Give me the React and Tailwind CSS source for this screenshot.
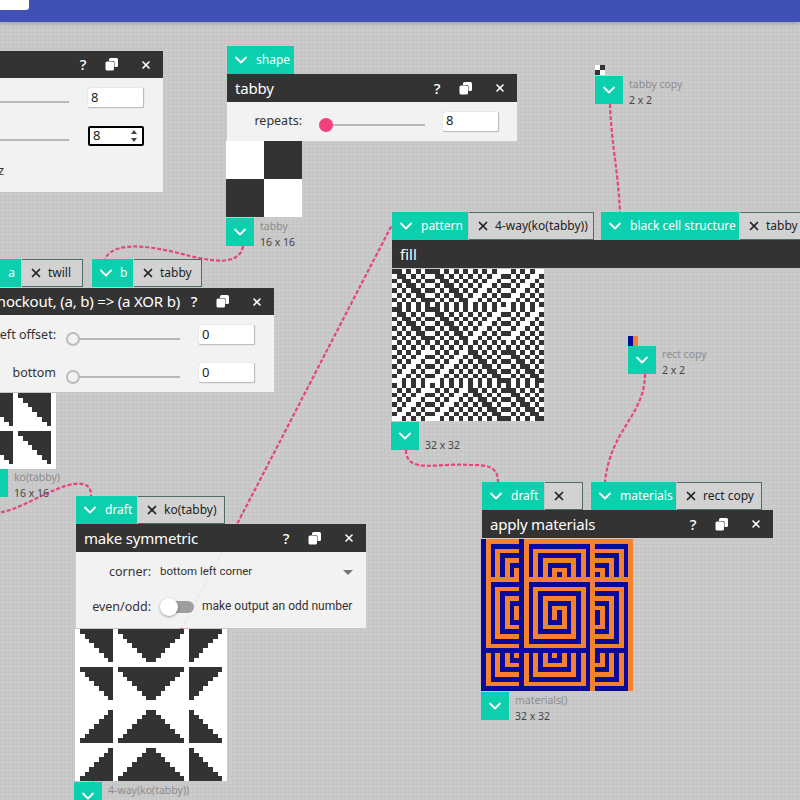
import { ChevronDown, X } from 'lucide-react';

const DARK = '#333333';
const BLUE = '#0a0a9a';
const ORANGE = '#f5822e';

// which cells of the 4-way draft are dark
const inTriangle = (i, n) => i >= 0 && i < n;

const fourWay = (x, y) => {
  let r = -1;
  if (y <= 6) r = y;
  else if (y >= 8 && y <= 14) r = y - 8;
  else if (y >= 17 && y <= 23) r = 23 - y;
  else if (y >= 25) r = 31 - y;
  if (r < 0) return false;
  if (inTriangle(x - 1, 7)) return x - 1 >= r;
  if (inTriangle(x - 9, 14)) return x >= 9 + r && x <= 22 - r;
  if (inTriangle(x - 24, 7)) return x <= 30 - r;
  return false;
};

const koTabby = (x, y) => {
  const c = x % 8;
  const r = y % 8;
  return r < 7 && c < 7 && c >= r;
};

const fillCell = (x, y) => (((x + y) % 2 === 1) !== fourWay(x, y) ? '#ffffff' : DARK);

const materialCell = (x, y) => {
  if (fourWay(x, y)) return y % 2 === 0 ? ORANGE : BLUE;
  return x % 2 === 0 ? BLUE : ORANGE;
};

const Cells = ({ cols, rows, color, className }) => {
  const cells = [];
  for (let y = 0; y < rows; y++) {
    for (let x = 0; x < cols; x++) {
      cells.push(<rect key={`${x}-${y}`} x={x} y={y} width="1" height="1" fill={color(x, y)} />);
    }
  }
  return (
    <svg viewBox={`0 0 ${cols} ${rows}`} preserveAspectRatio="none" shapeRendering="crispEdges" className={className}>
      {cells}
    </svg>
  );
};

const Output = ({ label, size }) => (
  <div className="flex">
    <button className="h-7 w-[28px] flex items-center justify-center bg-[#0ccfae] text-white">
      <ChevronDown size={20} strokeWidth={2.2} />
    </button>
    <div className="ml-[6px] text-[10.5px] leading-[16px]">
      <div className="text-[#8c8c8c]">{label}</div>
      <div className="text-[#444444]">{size}</div>
    </div>
  </div>
);

const Tab = ({ label, width }) => (
  <div className={`h-7 shrink-0 bg-[#0ccfae] flex items-center pl-[4px] text-white text-[12px] ${width}`}>
    <ChevronDown size={20} strokeWidth={2.2} className="mr-[5px] shrink-0" />
    <span className="whitespace-nowrap">{label}</span>
  </div>
);

const Source = ({ label, width }) => (
  <div className={`h-7 shrink-0 bg-[#d2d2d2] border-y border-r border-[#4f6a6a] flex items-center pl-[7px] text-[#222222] text-[12px] overflow-hidden ${width}`}>
    <X size={14} strokeWidth={3} className="mr-[5px] shrink-0" />
    <span className="whitespace-nowrap">{label}</span>
  </div>
);

const TitleIcons = ({ className }) => (
  <div className={`flex items-center text-white ${className}`}>
    <span className="w-3 text-[15px] font-medium text-center">?</span>
    <svg width="13" height="13" viewBox="0 0 13 13" className="ml-[16px]">
      <rect x="4" y="0" width="9" height="9" rx="1.5" fill="#ffffff" />
      <rect x="0" y="3" width="9.5" height="10" rx="1.5" fill="#333333" />
      <rect x="0.5" y="3.5" width="8.5" height="9" rx="1.5" fill="#ffffff" />
    </svg>
    <X size={12} strokeWidth={3.2} className="ml-[22px]" />
  </div>
);

const Slider = ({ width, pink, bare }) => (
  <div className={`relative h-[2px] mt-[7px] bg-[#b8b8b8] ${width}`}>
    {pink && <div className="absolute -left-[1px] -top-[6px] w-[14px] h-[14px] rounded-full bg-[#f2407c]" />}
    {!pink && !bare && (
      <div className="absolute left-0 -top-[6px] w-[14px] h-[14px] rounded-full border-2 border-[#bdbdbd] bg-[#f2f2f2]" />
    )}
  </div>
);

const NumberBox = ({ focus, value }) => (
  <div className={`w-[56px] h-[20px] bg-white rounded-[2px] flex items-center pl-[3px] text-[13px] text-[#222222] ${focus ? 'border-2 border-black' : 'border-r border-b border-[#bdbdbd] shadow-[0_0_1px_#999]'}`}>
    <span className="flex-1">{value}</span>
    {focus && (
      <svg width="8" height="14" viewBox="0 0 8 14" className="mr-[4px]">
        <path d="M4 1 7 5H1zM4 13 1 9h6z" fill="#444444" />
      </svg>
    )}
  </div>
);

const wires = [
  'M243 246C240 265 215 262 190 256C160 248 115 238 105 259',
  'M-5 513C15 512 40 495 55 490C70 483 92 478 91 496',
  'M88 790C150 700 290 420 392 225',
  'M610 104C611 140 618 170 620 212',
  'M645 374C645 415 610 430 605 482',
  'M406 450C406 475 440 462 470 465C485 465 498 465 498 482',
];

export default function App() {
  return (
    <div className="relative w-[800px] h-[800px] overflow-hidden text-[#333333] font-['Noto_Sans','Open_Sans',sans-serif] bg-[#cbcbcb] bg-[linear-gradient(#c5c5c5_1px,transparent_1px),linear-gradient(90deg,#c5c5c5_1px,transparent_1px)] bg-[size:4px_4px]">
      {/* wires sit under the panels */}
      <svg className="absolute inset-0" width="800" height="800" fill="none">
        {wires.map((d) => (
          <path key={d} d={d} stroke="#e5447c" strokeWidth="2.2" strokeDasharray="4 2" />
        ))}
      </svg>

      <header className="absolute top-0 left-0 right-0 h-[22px] bg-[#3f51b5] shadow-[0_1px_4px_rgba(0,0,0,0.25)]">
        <div className="w-[29px] h-[10px] bg-white rounded-br-[3px]" />
      </header>

      {/* size panel, cut by the left edge */}
      <section className="absolute left-0 top-[51px] w-[163px]">
        <div className="h-[27px] bg-[#333333] flex items-center justify-end">
          <TitleIcons className="pr-[11px]" />
        </div>
        <div className="h-[114px] bg-[#f2f2f2] pt-[10px]">
          <div className="flex items-center h-[20px]">
            <Slider width="w-[69px]" bare />
            <div className="ml-[19px]"><NumberBox value="8" /></div>
          </div>
          <div className="flex items-center h-[20px] mt-[18px]">
            <Slider width="w-[69px]" bare />
            <div className="ml-[19px]"><NumberBox value="8" focus /></div>
          </div>
          <div className="mt-[14px] text-[13px] leading-[20px] -ml-[2px]">z</div>
        </div>
      </section>

      {/* tabby */}
      <section className="absolute left-[227px] top-[46px] w-[290px]">
        <Tab label="shape" width="w-[67px]" />
        <div className="h-[28px] bg-[#333333] flex items-center justify-between pl-[8px] text-white text-[15px] tracking-[-0.2px]">
          tabby
          <TitleIcons className="pr-[11px]" />
        </div>
        <div className="h-[39px] bg-[#f2f2f2] flex items-center">
          <span className="w-[75px] text-right text-[12.5px]">repeats:</span>
          <div className="ml-[18px]"><Slider width="w-[105px]" pink /></div>
          <div className="ml-[18px]"><NumberBox value="8" /></div>
        </div>
        <div className="-ml-[1px]">
          <Cells cols={2} rows={2} color={(x, y) => ((x + y) % 2 ? DARK : '#ffffff')} className="w-[76px] h-[76px] block" />
          <div className="mt-px"><Output label="tabby" size="16 x 16" /></div>
        </div>
      </section>

      {/* knockout */}
      <section className="absolute left-0 top-[259px] w-[274px]">
        <div className="flex">
          <div className="h-7 w-[21px] bg-[#0ccfae] text-white text-[12px] flex items-center justify-end pr-[6px]">a</div>
          <div className="ml-px"><Source label="twill" width="w-[61px]" /></div>
          <div className="ml-[9px] h-7 w-[41px] bg-[#0ccfae] flex items-center pl-[4px] text-white text-[12px]">
            <ChevronDown size={20} strokeWidth={2.2} className="mr-[4px] shrink-0" />
            b
          </div>
          <div className="ml-px"><Source label="tabby" width="w-[68px]" /></div>
        </div>
        <div className="h-[27px] mt-px bg-[#333333] flex items-center text-white text-[15px] tracking-[-0.2px] relative overflow-hidden">
          <span className="absolute right-[94px] whitespace-nowrap">knockout, (a, b) =&gt; (a XOR b)</span>
          <TitleIcons className="absolute right-[11px]" />
        </div>
        <div className="h-[77px] bg-[#f2f2f2] text-[12.5px] pt-[10px]">
          <div className="flex items-center h-[20px]">
            <span className="w-[56px] whitespace-nowrap flex justify-end">left offset:</span>
            <div className="ml-[10px]"><Slider width="w-[114px]" /></div>
            <div className="ml-[19px]"><NumberBox value="0" /></div>
          </div>
          <div className="flex items-center h-[20px] mt-[18px]">
            <span className="w-[56px] text-right">bottom</span>
            <div className="ml-[10px]"><Slider width="w-[114px]" /></div>
            <div className="ml-[19px]"><NumberBox value="0" /></div>
          </div>
        </div>
      </section>

      <section className="absolute left-[-20px] top-[393px]">
        <Cells cols={16} rows={16} color={(x, y) => (koTabby(x, y) ? DARK : '#ffffff')} className="w-[76px] h-[76px] block" />
        <Output label="ko(tabby)" size="16 x 16" />
      </section>

      {/* make symmetric */}
      <section className="absolute left-[76px] top-[496px] w-[290px]">
        <div className="flex">
          <Tab label="draft" width="w-[61px]" />
          <div className="ml-px"><Source label="ko(tabby)" width="w-[87px]" /></div>
        </div>
        <div className="h-[28px] bg-[#333333] flex items-center justify-between pl-[8px] text-white text-[15px] tracking-[-0.2px]">
          make symmetric
          <TitleIcons className="pr-[11px] tracking-normal" />
        </div>
        <div className="h-[76px] bg-[#f6f6f6]/90 text-[12.5px]">
          <div className="flex items-center pt-[10px] h-[30px]">
            <span className="w-[75px] text-right">corner:</span>
            <span className="ml-[9px] w-[107px] text-[11.5px] font-['Roboto',sans-serif]">bottom left corner</span>
            <svg width="10" height="5" viewBox="0 0 10 5" className="ml-[76px]">
              <path d="M0 0h10L5 5z" fill="#757575" />
            </svg>
          </div>
          <div className="flex items-center mt-[13px] h-[24px]">
            <span className="w-[75px] text-right">even/odd:</span>
            <div className="relative ml-[10px] w-[33px] h-[12px] rounded-full bg-[#9e9e9e]">
              <div className="absolute -left-[1px] -top-[3px] w-[18px] h-[18px] rounded-full bg-white shadow-[0_1px_3px_rgba(0,0,0,0.35)]" />
            </div>
            <span className="ml-[8px] -mt-[2px] text-[12px] font-['Roboto',sans-serif]">make output an odd number</span>
          </div>
        </div>
        <div className="-ml-[1px] mt-px">
          <Cells cols={32} rows={32} color={(x, y) => (fourWay(x, y) ? DARK : '#ffffff')} className="w-[152px] h-[152px] block" />
          <div className="-ml-[1px] mt-px"><Output label="4-way(ko(tabby))" size="" /></div>
        </div>
      </section>

      {/* fill, runs past the right edge */}
      <section className="absolute left-[392px] top-[212px] w-[440px]">
        <div className="flex">
          <Tab label="pattern" width="w-[76px]" />
          <div className="ml-px"><Source label="4-way(ko(tabby))" width="w-[125px]" /></div>
          <div className="ml-[7px]"><Tab label="black cell structure" width="w-[138px]" /></div>
          <div className="ml-px"><Source label="tabby copy" width="w-[80px]" /></div>
        </div>
        <div className="h-[28px] bg-[#333333] flex items-center pl-[8px] text-white text-[15px]">fill</div>
        <div className="mt-px">
          <Cells cols={32} rows={32} color={fillCell} className="w-[152px] h-[152px] block" />
          <div className="-ml-px mt-px flex">
            <button className="h-7 w-[28px] flex items-center justify-center bg-[#0ccfae] text-white">
              <ChevronDown size={20} strokeWidth={2.2} />
            </button>
            <span className="ml-[6px] pt-[15px] text-[10.5px] leading-[16px] text-[#444444]">32 x 32</span>
          </div>
        </div>
      </section>

      {/* apply materials */}
      <section className="absolute left-[482px] top-[482px] w-[291px]">
        <div className="flex">
          <Tab label="draft" width="w-[62px]" />
          <div className="ml-px"><Source label="" width="w-[38px]" /></div>
          <div className="ml-[8px]"><Tab label="materials" width="w-[85px]" /></div>
          <div className="ml-px"><Source label="rect copy" width="w-[85px]" /></div>
        </div>
        <div className="h-[28px] bg-[#333333] flex items-center justify-between pl-[8px] text-white text-[15px] tracking-[-0.2px]">
          apply materials
          <TitleIcons className="pr-[11px]" />
        </div>
        <div className="-ml-px mt-px">
          <Cells cols={32} rows={32} color={materialCell} className="w-[152px] h-[152px] block" />
          <div className="mt-px"><Output label="materials()" size="32 x 32" /></div>
        </div>
      </section>

      {/* copies */}
      <section className="absolute left-[595px] top-[65px]">
        <Cells cols={2} rows={2} color={(x, y) => ((x + y) % 2 ? DARK : '#ffffff')} className="w-[10px] h-[10px] block" />
        <div className="mt-px"><Output label="tabby copy" size="2 x 2" /></div>
      </section>
      <section className="absolute left-[628px] top-[336px]">
        <Cells cols={2} rows={1} color={(x) => (x ? ORANGE : BLUE)} className="w-[10px] h-[10px] block" />
        <Output label="rect copy" size="2 x 2" />
      </section>
    </div>
  );
}
